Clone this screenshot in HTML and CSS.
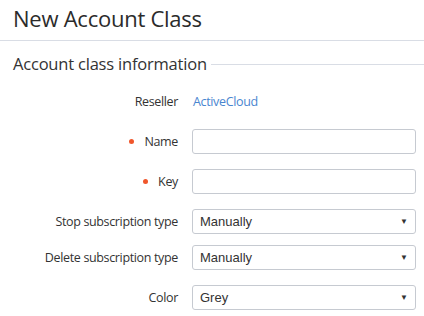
FILE: index.html
```html
<!DOCTYPE html>
<html lang="en">

<head>
  <meta charset="UTF-8" />
  <meta name="viewport" content="width=device-width, initial-scale=1.0">
  <title>New Account Class</title>
  <link rel="stylesheet" href="styles.css">
</head>

<body>
  <h1 class="page-title">New Account Class</h1>

  <div class="section">
    <h2 class="section-title">Account class information</h2>

    <form class="form">
      <div class="row">
        <label class="label">Reseller</label>
        <a href="#" class="value-link">ActiveCloud</a>
      </div>

      <div class="row">
        <label class="label required" for="name">Name</label>
        <input type="text" id="name" class="field">
      </div>

      <div class="row">
        <label class="label required" for="key">Key</label>
        <input type="text" id="key" class="field">
      </div>

      <div class="row row-tight">
        <label class="label" for="stop">Stop subscription type</label>
        <div class="select-wrap">
          <select id="stop" class="field select">
            <option>Manually</option>
          </select>
          <span class="arrow">▼</span>
        </div>
      </div>

      <div class="row">
        <label class="label" for="delete">Delete subscription type</label>
        <div class="select-wrap">
          <select id="delete" class="field select">
            <option>Manually</option>
          </select>
          <span class="arrow">▼</span>
        </div>
      </div>

      <div class="row">
        <label class="label" for="color">Color</label>
        <div class="select-wrap">
          <select id="color" class="field select">
            <option>Grey</option>
          </select>
          <span class="arrow">▼</span>
        </div>
      </div>
    </form>
  </div>
</body>

</html>
```

FILE: styles.css
```css
body {
  margin: 0;
  font-family: 'Open Sans', sans-serif;
  color: #333;
  background: #fff;
}

.page-title {
  margin: 0;
  padding: 3px 13px 0;
  height: 37px;
  font-size: 22px;
  letter-spacing: -0.25px;
  font-weight: 400;
  color: #2b2b2b;
  border-bottom: 1px solid #d9dde5;
}

.section {
  padding: 0 8px 0 13px;
}

.section-title {
  display: flex;
  align-items: center;
  gap: 4px;
  margin: 11px -8px 0 0;
  font-size: 16.5px;
  letter-spacing: -0.2px;
  font-weight: 400;
  color: #333;
  line-height: 24px;
}

.section-title::after {
  content: "";
  flex: 1;
  height: 1px;
  background: #d9dde5;
}

.form {
  margin-top: 13px;
}

/* label column + field column */
.row {
  display: grid;
  grid-template-columns: 165px 1fr;
  column-gap: 14px;
  align-items: center;
  height: 25px;
  margin-bottom: 15px;
}

.row-tight {
  margin-bottom: 11px;
}

.label {
  text-align: right;
  font-size: 12.5px;
  letter-spacing: -0.35px;
}

.required::before {
  content: "";
  display: inline-block;
  width: 5px;
  height: 5px;
  border-radius: 50%;
  background: #f0562b;
  margin-right: 10px;
  vertical-align: middle;
  position: relative;
  top: -1px;
}

.value-link {
  font-size: 12.5px;
  letter-spacing: -0.35px;
  color: #4a86d0;
  text-decoration: none;
  padding-left: 1px;
}

.field {
  box-sizing: border-box;
  width: 100%;
  height: 25px;
  margin: 0;
  border: 1px solid #c6cad1;
  border-radius: 3px;
  background: #fff;
  font-family: 'Liberation Sans', Arial, sans-serif;
  font-size: 13px;
  color: #333;
  padding: 0 7px;
}

.select-wrap {
  position: relative;
}

.select {
  appearance: none;
  -webkit-appearance: none;
  outline: none;
}

.arrow {
  position: absolute;
  right: 8px;
  top: 8px;
  font-size: 8px;
  line-height: 8px;
  color: #333;
  pointer-events: none;
}
```
